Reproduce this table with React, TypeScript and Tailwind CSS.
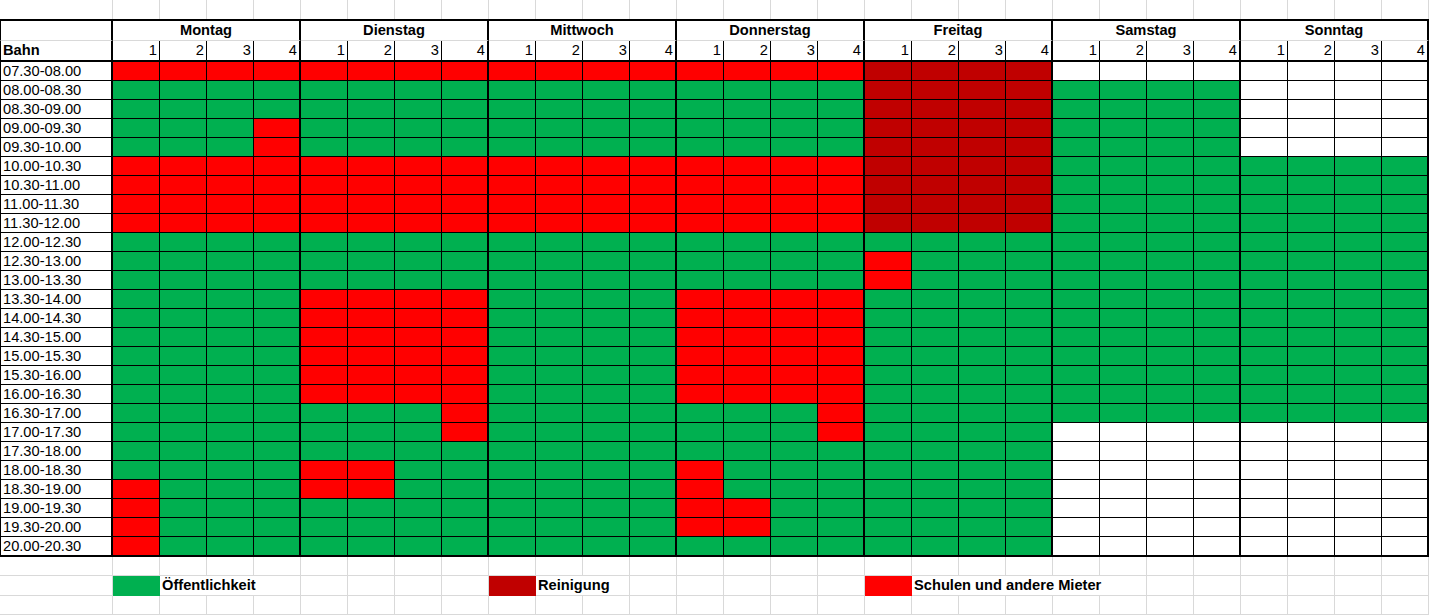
import React from "react";

const G = "bg-[#00b050]";
const R = "bg-[#ff0000]";
const D = "bg-[#c00000]";
const W = "bg-white";

const days = ["Montag", "Dienstag", "Mittwoch", "Donnerstag", "Freitag", "Samstag", "Sonntag"];

const times: string[] = [];
for (let i = 0; i < 26; i++) {
  const s = 7 * 60 + 30 + i * 30;
  const e = s + 30;
  const f = (m: number) =>
    `${String(Math.floor(m / 60)).padStart(2, "0")}.${String(m % 60).padStart(2, "0")}`;
  times.push(`${f(s)}-${f(e)}`);
}

function color(day: number, r: number, l: number): string {
  const lane = l + 1;
  switch (day) {
    case 0:
      if (r === 0) return R;
      if ((r === 3 || r === 4) && lane === 4) return R;
      if (r >= 5 && r <= 8) return R;
      if (r >= 22 && lane === 1) return R;
      return G;
    case 1:
      if (r === 0) return R;
      if (r >= 5 && r <= 8) return R;
      if (r >= 12 && r <= 17) return R;
      if ((r === 18 || r === 19) && lane === 4) return R;
      if ((r === 21 || r === 22) && lane <= 2) return R;
      return G;
    case 2:
      if (r === 0) return R;
      if (r >= 5 && r <= 8) return R;
      return G;
    case 3:
      if (r === 0) return R;
      if (r >= 5 && r <= 8) return R;
      if (r >= 12 && r <= 17) return R;
      if ((r === 18 || r === 19) && lane === 4) return R;
      if ((r === 21 || r === 22) && lane === 1) return R;
      if ((r === 23 || r === 24) && lane <= 2) return R;
      return G;
    case 4:
      if (r <= 8) return D;
      if ((r === 10 || r === 11) && lane === 1) return R;
      return G;
    case 5:
      if (r >= 1 && r <= 18) return G;
      return W;
    default:
      if (r >= 5 && r <= 18) return G;
      return W;
  }
}

const lanes = Array.from({ length: 28 }, (_, i) => i);

function EmptyRow({ h }: { h: string }) {
  return (
    <>
      <div className={`${h} border-r border-b border-r-[#d9d9d9] border-b-[#d9d9d9]`} />
      {lanes.map((l) => (
        <div key={l} className={`${h} border-r border-b border-r-[#d9d9d9] border-b-[#d9d9d9]`} />
      ))}
    </>
  );
}

export default function App() {
  return (
    <div className="w-[1429px] h-[615px] overflow-hidden bg-white text-black font-[family-name:'Liberation_Sans',Arial,sans-serif] text-[14.67px] leading-[19px]">
      <div className="grid grid-cols-[113px_repeat(28,47px)]">
        {/* top empty row */}
        <div className="h-[19px] border-r border-r-[#d9d9d9]" />
        {lanes.map((l) => (
          <div key={l} className="h-[19px] border-r border-r-[#d9d9d9]" />
        ))}

        {/* day header row */}
        <div className="h-[22px] border-l border-t-2 border-r-2 border-b border-l-black border-t-black border-r-black border-b-[#d9d9d9]" />
        {days.map((d) => (
          <div
            key={d}
            className="col-span-4 h-[22px] border-t-2 border-r-2 border-b border-t-black border-r-black border-b-[#d9d9d9] text-center font-bold"
          >
            {d}
          </div>
        ))}

        {/* lane number row */}
        <div className="h-[21px] border-l border-r-2 border-b-2 border-l-black border-r-black border-b-black pl-[2px] font-bold">
          Bahn
        </div>
        {lanes.map((l) => (
          <div
            key={l}
            className={`h-[21px] border-b-2 border-b-black border-r-black ${l % 4 === 3 ? "border-r-2" : "border-r"} text-right pr-[2px]`}
          >
            {(l % 4) + 1}
          </div>
        ))}

        {/* data rows */}
        {times.map((t, r) => {
          const last = r === times.length - 1;
          const hb = last ? "h-[20px] border-b-2" : "h-[19px] border-b";
          return (
            <React.Fragment key={t}>
              <div className={`${hb} border-b-black border-l border-l-black border-r-2 border-r-black pl-[2px] whitespace-nowrap`}>
                {t}
              </div>
              {lanes.map((l) => (
                <div
                  key={l}
                  className={`${hb} border-b-black border-r-black ${l % 4 === 3 ? "border-r-2" : "border-r"} ${color(Math.floor(l / 4), r, l % 4)}`}
                />
              ))}
            </React.Fragment>
          );
        })}

        {/* empty row below table */}
        <EmptyRow h="h-[19px]" />

        {/* legend row */}
        <div className="h-[20px] border-r border-b border-r-[#d9d9d9] border-b-[#d9d9d9]" />
        {lanes.map((l) => {
          if (l === 0) return <div key={l} className={`h-[20px] ${G}`} />;
          if (l === 1)
            return (
              <div key={l} className="col-span-3 h-[20px] border-r border-b border-r-[#d9d9d9] border-b-[#d9d9d9] pl-[2px] font-bold whitespace-nowrap">
                Öffentlichkeit
              </div>
            );
          if (l === 2 || l === 3) return null;
          if (l === 8) return <div key={l} className={`h-[20px] ${D}`} />;
          if (l === 9)
            return (
              <div key={l} className="col-span-2 h-[20px] border-r border-b border-r-[#d9d9d9] border-b-[#d9d9d9] pl-[2px] font-bold whitespace-nowrap">
                Reinigung
              </div>
            );
          if (l === 10) return null;
          if (l === 16) return <div key={l} className={`h-[20px] ${R}`} />;
          if (l === 17)
            return (
              <div key={l} className="col-span-5 h-[20px] border-r border-b border-r-[#d9d9d9] border-b-[#d9d9d9] pl-[2px] font-bold whitespace-nowrap">
                Schulen und andere Mieter
              </div>
            );
          if (l >= 18 && l <= 21) return null;
          return <div key={l} className="h-[20px] border-r border-b border-r-[#d9d9d9] border-b-[#d9d9d9]" />;
        })}

        {/* last empty row */}
        <EmptyRow h="h-[19px]" />
      </div>
    </div>
  );
}
